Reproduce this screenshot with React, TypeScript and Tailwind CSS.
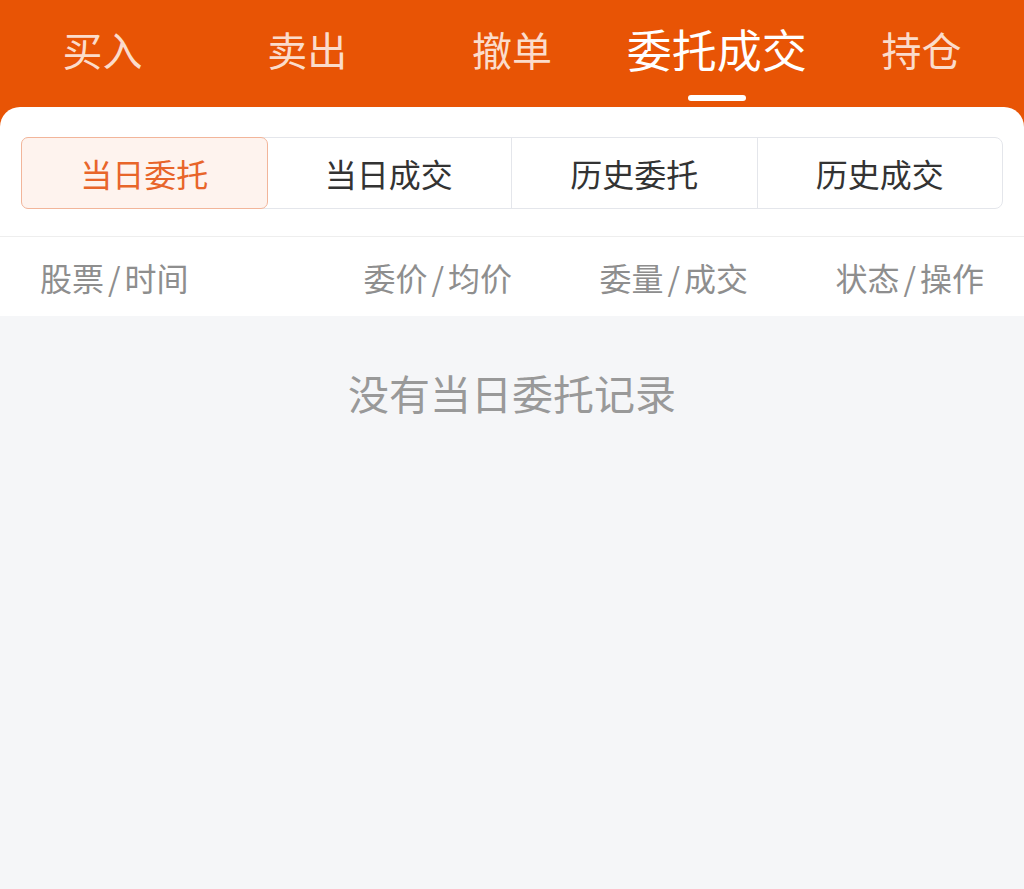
import React from "react";

const FONT = { fontFamily: '"Noto Sans CJK SC", "Noto Sans", sans-serif' };

function Pair({ a, b }: { a: string; b: string }) {
  return (
    <>
      {a}
      <span className="mx-[4px]">/</span>
      {b}
    </>
  );
}

export default function App() {
  const tabs = ["买入", "卖出", "撤单", "委托成交", "持仓"];
  const active = 3;
  const segs = ["当日委托", "当日成交", "历史委托", "历史成交"];
  return (
    <div className="w-full h-[889px] bg-[#E85405] flex flex-col overflow-hidden" style={FONT}>
      <div className="h-[107px] grid grid-cols-5 shrink-0">
        {tabs.map((t, i) => (
          <div key={t} className="relative flex items-start justify-center pt-[25px]">
            <span
              className={
                i === active
                  ? "text-[45px] leading-[48px] text-white"
                  : "text-[40px] leading-[48px] text-[#FBDCCB]"
              }
            >
              {t}
            </span>
            {i === active && (
              <div className="absolute top-[95px] left-1/2 -translate-x-1/2 w-[58px] h-[6px] rounded-full bg-white" />
            )}
          </div>
        ))}
      </div>
      <div className="flex-1 bg-white rounded-t-[20px] flex flex-col overflow-hidden">
        <div className="pt-[30px] px-[21px]">
          <div className="flex h-[72px] rounded-[8px] border border-[#E4E6EB]">
            {segs.map((s, i) => (
              <div
                key={s}
                className={
                  i === 0
                    ? "flex-1 flex items-center justify-center bg-[#FEF3EE] border border-[#F2B59A] rounded-[7px] -m-px text-[32px] text-[#E8652A]"
                    : i === 1
                    ? "flex-1 flex items-center justify-center text-[32px] text-[#333333]"
                    : "flex-1 flex items-center justify-center border-l border-[#E4E6EB] text-[32px] text-[#333333]"
                }
              >
                {s}
              </div>
            ))}
          </div>
        </div>
        <div className="mt-[27px] h-[80px] border-t border-[#EEEEEE] grid grid-cols-4 items-center px-10 text-[32px] text-[#8E8E8E] bg-white">
          <div className="text-left"><Pair a="股票" b="时间" /></div>
          <div className="text-right"><Pair a="委价" b="均价" /></div>
          <div className="text-right"><Pair a="委量" b="成交" /></div>
          <div className="text-right"><Pair a="状态" b="操作" /></div>
        </div>
        <div className="flex-1 bg-[#F5F6F8] flex flex-col items-center pt-[52px]">
          <div className="text-[41px] leading-[48px] text-[#999999]">没有当日委托记录</div>
        </div>
      </div>
    </div>
  );
}
